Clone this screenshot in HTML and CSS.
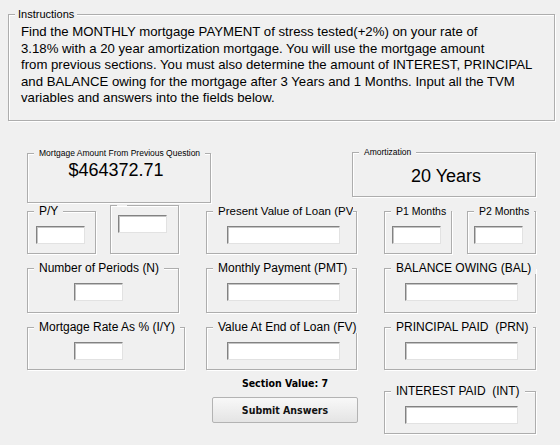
FILE: index.html
```html
<!DOCTYPE html>
<html>
	<head>
		<meta charset="utf-8" />
		<title>TVM - Mortgage</title>
		<link rel="stylesheet" href="styles.css">
	</head>
	<body>
		<fieldset class="box instructions">
			<legend class="cap">Instructions</legend>
			<p class="task">Find the MONTHLY mortgage PAYMENT of stress tested(+2%) on your rate of<br>
			3.18% with a 20 year amortization mortgage. You will use the mortgage amount<br>
			from previous sections. You must also determine the amount of INTEREST, PRINCIPAL<br>
			and BALANCE owing for the mortgage after 3 Years and 1 Months. Input all the TVM<br>
			variables and answers into the fields below.</p>
		</fieldset>

		<div class="form">
			<div class="row row0">
				<fieldset class="box amount">
					<legend class="tiny">Mortgage Amount From Previous Question</legend>
					<div class="big">$464372.71</div>
				</fieldset>
				<fieldset class="box amort">
					<legend class="tiny">Amortization</legend>
					<div class="big">20 Years</div>
				</fieldset>
			</div>

			<div class="row row1">
				<fieldset class="box py">
					<legend>P/Y</legend>
					<input type="text" class="sm">
				</fieldset>
				<fieldset class="box cy">
					<legend></legend>
					<input type="text" class="sm">
				</fieldset>
				<fieldset class="box mid">
					<legend class="clip">Present Value of Loan (PV)</legend>
					<input type="text" class="wide">
				</fieldset>
				<fieldset class="box p1">
					<legend class="months">P1 Months</legend>
					<input type="text" class="sm">
				</fieldset>
				<fieldset class="box p2">
					<legend class="months">P2 Months</legend>
					<input type="text" class="sm">
				</fieldset>
			</div>

			<div class="row row2">
				<fieldset class="box left">
					<legend>Number of Periods (N)</legend>
					<input type="text" class="sm centre">
				</fieldset>
				<fieldset class="box mid">
					<legend>Monthly Payment (PMT)</legend>
					<input type="text" class="wide">
				</fieldset>
				<fieldset class="box right">
					<legend>BALANCE OWING (BAL)</legend>
					<input type="text" class="wide">
				</fieldset>
			</div>

			<div class="row row3">
				<fieldset class="box left rate">
					<legend>Mortgage Rate As % (I/Y)</legend>
					<input type="text" class="sm centre">
				</fieldset>
				<fieldset class="box mid">
					<legend>Value At End of Loan (FV)</legend>
					<input type="text" class="wide">
				</fieldset>
				<fieldset class="box right">
					<legend>PRINCIPAL PAID &nbsp;(PRN)</legend>
					<input type="text" class="wide">
				</fieldset>
			</div>

			<div class="row row4">
				<div class="actions">
					<div class="section">Section Value: 7</div>
					<button class="submit">Submit Answers</button>
				</div>
				<fieldset class="box right interest">
					<legend>INTEREST PAID &nbsp;(INT)</legend>
					<input type="text" class="wide">
				</fieldset>
			</div>
		</div>
	</body>
</html>
```

FILE: styles.css
```css
*{box-sizing:border-box}
html,body{margin:0;padding:0}
body{width:560px;height:445px;overflow:hidden;background:#f0f0f0;color:#000;font:12px "Liberation Sans", Arial, sans-serif}

/* etched group box */
.box{margin:0;padding:0;border:1px solid #adadad;box-shadow:inset 1px 1px 0 #fff, 1px 1px 0 #fff;min-width:0}
.box legend{margin-left:6px;padding:0 5px;font-size:12px;line-height:12px;white-space:nowrap;background:#f0f0f0}
.box legend.tiny{font-size:8.5px;line-height:10px}
.box legend.cap{font-size:11px;line-height:12px;margin-left:6px;padding:0 3px}
.box legend.months{font-size:10.5px}
.box legend.clip{max-width:140px;overflow:hidden;font-size:11.5px}

.instructions{margin:8px 0 0 8px;width:547px;height:113px}
.task{margin:4px 0 0 12px;white-space:nowrap;font-size:13.2px;line-height:16.5px}

.form{padding-left:27px}
.row{display:flex;align-items:flex-start}

.row0{margin-top:26px;width:509px;justify-content:space-between}
.amount{margin-top:1px;width:184px;height:55px}
.amort{width:184px;height:50px}
.big{text-align:center;font-size:18px;line-height:22px}
.amount .big{margin-top:1px;padding-right:6px}
.amort .big{margin-top:8px;padding-left:4px}

.row1{margin-top:2px}
.row2,.row3{margin-top:8px}
.row1 .box,.row3 .box{height:49px}
.row2 .box{height:51px}

.py{width:69px}
.cy{width:69px;margin-left:14px}
.mid{width:151px;margin-left:27px}
.p1{width:68px;margin-left:27px}
.p2{width:69px;margin-left:15px}
.left{width:152px}
.rate{width:158px}
.rate + .mid{margin-left:21px}
.right{width:152px;margin-left:27px}

input{display:block;margin:9px 0 0 0;height:18px;padding:0 3px;background:#fff;border:1px solid;border-color:#828282 #e2e2e2 #e2e2e2 #828282;box-shadow:inset 1px 1px 0 #c4c4c4;font:12px "Liberation Sans", Arial, sans-serif}
input.sm{width:49px;margin-left:8px}
.cy input.sm,.p1 input.sm{margin-left:7px}
.p2 input.sm{margin-left:6px}
input.centre{margin-left:46px}
input.wide{width:113px;margin-left:20px}

.actions{margin-left:185px;width:146px;text-align:center}
.section{margin-top:7px;font:bold 10.5px/13px "DejaVu Sans Condensed", "DejaVu Sans", sans-serif;font-stretch:condensed}
.submit{display:block;margin-top:7px;width:146px;height:26px;border:1px solid #b3b3b3;border-radius:2px;background:linear-gradient(#f8f8f8,#e4e4e4);font:bold 10.5px "DejaVu Sans Condensed", "DejaVu Sans", sans-serif;font-stretch:condensed;color:#111}
.interest{margin-top:15px;margin-left:26px;height:49px}
```
